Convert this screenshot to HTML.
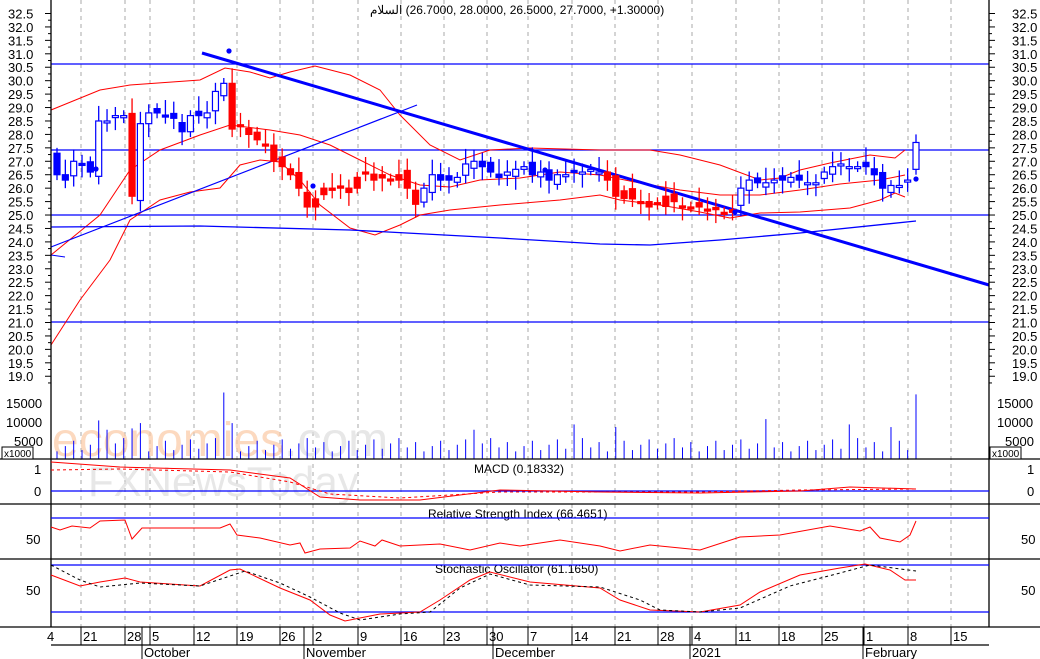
<!DOCTYPE html>
<html><head><meta charset="utf-8"><style>
body{margin:0;background:#fff;width:1040px;height:659px;overflow:hidden}
svg{display:block;font-family:"Liberation Sans",sans-serif}
text{font-size:13px;fill:#000}
</style></head><body>
<svg id="s" width="1040" height="659" viewBox="0 0 1040 659">
<rect width="1040" height="659" fill="#fff"/>
<g id="grid" stroke="#aaa" stroke-dasharray="4,4" stroke-width="1"></g>
<!-- watermark -->
<text x="52" y="456" style="font-size:48px;fill:#fbc9a5;opacity:.7">economies<tspan style="fill:#ddd">.com</tspan></text>
<text x="88" y="496" style="font-size:42px;fill:#ddd;opacity:.7">FXNewsToday</text>
<g id="main"></g>
<g id="vol"></g>
<!-- panel borders -->
<g stroke="#000" stroke-width="1.3" fill="none">
<line x1="51" y1="0" x2="51" y2="627"/><line x1="989" y1="0" x2="989" y2="627"/>
<line x1="0" y1="459" x2="1040" y2="459"/><line x1="0" y1="504" x2="1040" y2="504"/>
<line x1="0" y1="559" x2="1040" y2="559"/><line x1="0" y1="627" x2="1040" y2="627"/>
<line x1="51" y1="645" x2="989" y2="645"/>
</g>
<g id="ticks" stroke="#000" stroke-width="1"></g>
<text x="370" y="14" direction="ltr" unicode-bidi="embed" style="font-size:12px;direction:ltr;unicode-bidi:embed">&#x200E;السلام&#x200E; (26.7000, 28.0000, 26.5000, 27.7000, +1.30000)</text>
<g id="ylab" style="font-size:13px"></g>
<!-- volume labels -->
<g style="font-size:13px">
<text x="6" y="408">15000</text><text x="6" y="427">10000</text><text x="14" y="446">5000</text>
<text x="997" y="408">15000</text><text x="997" y="427">10000</text><text x="1005" y="446">5000</text>
<rect x="2" y="447" width="31" height="12" fill="#fff" stroke="#000"/><text x="4" y="457" style="font-size:10px">x1000</text>
<rect x="990" y="447" width="31" height="12" fill="#fff" stroke="#000"/><text x="992" y="457" style="font-size:10px">x1000</text>
<text x="34" y="474">1</text><text x="34" y="496">0</text><text x="1027" y="474">1</text><text x="1027" y="496">0</text>
<text x="26" y="544">50</text><text x="1021" y="544">50</text>
<text x="26" y="595">50</text><text x="1021" y="595">50</text>
<text x="474" y="473" style="font-size:12px">MACD (0.18332)</text>
<text x="428" y="518" style="font-size:12px">Relative Strength Index (66.4651)</text>
<text x="435" y="573" style="font-size:12px">Stochastic Oscillator (61.1650)</text>
</g>
<g id="osc" fill="none"></g>
<g style="font-size:13px">
<text x="47" y="641">4</text><text x="83" y="641">21</text><text x="127" y="641">28</text><text x="152" y="641">5</text>
<text x="196" y="641">12</text><text x="239" y="641">19</text><text x="281" y="641">26</text><text x="315" y="641">2</text>
<text x="360" y="641">9</text><text x="403" y="641">16</text><text x="446" y="641">23</text><text x="489" y="641">30</text>
<text x="530" y="641">7</text><text x="574" y="641">14</text><text x="617" y="641">21</text><text x="660" y="641">28</text>
<text x="694" y="641">4</text><text x="738" y="641">11</text><text x="781" y="641">18</text><text x="824" y="641">25</text>
<text x="866" y="641">1</text><text x="910" y="641">8</text><text x="953" y="641">15</text>
<text x="144" y="657">October</text><text x="306" y="657">November</text><text x="495" y="657">December</text>
<text x="692" y="657">2021</text><text x="865" y="657">February</text>
</g>
</svg>
<script>
var NS="http://www.w3.org/2000/svg";
function el(p,t,a){var e=document.createElementNS(NS,t);for(var k in a)e.setAttribute(k,a[k]);document.getElementById(p).appendChild(e);return e;}
function Y(p){return 13.5+(32.5-p)*26.87;}
var gx=[81,125,150,194,237,280,313,358,401,444,487,528,572,615,658,692,736,779,822,864,908,951];
gx.forEach(function(x){el("grid","line",{x1:x,y1:0,x2:x,y2:627});});
gx.forEach(function(x){el("ticks","line",{x1:x,y1:627,x2:x,y2:645});});
[142,304,493,690,863].forEach(function(x){el("ticks","line",{x1:x,y1:627,x2:x,y2:659});});
for(var p=19;p<=32.5;p+=0.5){var y=Y(p);var s=p.toFixed(1);
 var t=el("ylab","text",{x:8,y:y+5});t.textContent=s;
 var t2=el("ylab","text",{x:1012,y:y+5});t2.textContent=s;
 el("ticks","line",{x1:45,y1:y,x2:51,y2:y});el("ticks","line",{x1:989,y1:y,x2:995,y2:y});
 el("ticks","line",{x1:48,y1:y+6.7,x2:51,y2:y+6.7});el("ticks","line",{x1:989,y1:y+6.7,x2:992,y2:y+6.7});
}
[64,150,215,322].forEach(function(y){el("main","line",{x1:51,y1:y,x2:989,y2:y,stroke:"#00f","stroke-width":1.3});});
function pl(pts,c,w,par,d){var a={points:pts,stroke:c,"stroke-width":w||1,fill:"none"};if(d)a["stroke-dasharray"]=d;return el(par||"main","polyline",a);}
pl("51,110 100,90 130,85 200,80 225,68 250,72 270,78 290,72 315,66 350,75 380,90 400,115 430,145 460,160 490,150 530,148 600,150 650,150 680,155 720,165 760,180 780,178 800,170 830,163 870,155 895,158 905,150","red");
pl("51,255 100,215 130,170 160,150 200,135 230,125 270,130 300,135 330,145 360,160 390,175 420,185 450,187 480,180 520,178 560,172 600,175 640,183 680,190 720,195 760,195 800,190 840,184 880,180 905,175","red");
pl("51,345 80,300 110,260 130,220 160,200 190,192 220,188 240,165 260,160 280,162 300,180 320,205 350,228 375,235 400,225 420,215 450,210 500,205 560,200 600,195 620,200 660,205 700,212 730,218 760,213 800,212 850,208 880,200 895,193 905,197","red");
pl("51,227 200,226 350,230 500,238 600,244 650,245 720,240 800,233 916,221","#00f",1.3);
pl("51,255 65,257","#00f");
pl("51,247 417,105","#00f",1.2);
el("main","line",{x1:202,y1:53,x2:989,y2:285,stroke:"#00f","stroke-width":3});
var c=[26.5,26.3,27.0,26.9,26.6,28.5,28.5,28.7,28.7,25.7,28.4,28.8,28.8,28.7,28.6,28.1,28.7,28.7,28.8,29.6,29.9,28.2,28.3,28.0,27.8,27.6,27.0,26.8,26.5,26.0,25.3,25.6,26.0,26.0,26.0,26.0,26.4,26.6,26.3,26.5,26.3,26.5,26.0,25.4,26.0,26.5,26.3,26.3,26.4,26.9,27.0,26.8,26.6,26.4,26.6,26.7,26.8,26.5,26.6,26.3,26.5,26.5,26.6,26.6,26.7,26.6,26.3,25.7,25.9,25.6,25.5,25.3,25.4,25.7,25.5,25.3,25.3,25.3,25.2,25.2,25.1,25.2,26.0,26.3,26.2,26.2,26.3,26.3,26.4,26.3,26.2,26.2,26.6,26.8,26.9,26.8,26.8,26.8,26.5,26.0,26.1,26.1,26.3,27.7];
var n=c.length,st=(916-57)/(n-1);
for(var i=0;i<n;i++){var x=57+i*st,cl=c[i],op=i?c[i-1]+((i*7)%5-2)*0.08:27.3;
 var hi=Math.max(op,cl)+0.2+((i*3)%4)*0.12,lo=Math.min(op,cl)-0.2-((i*5)%4)*0.1;
 if(i==n-1){op=26.7;hi=28.0;lo=26.5;}
 var red=(x>230&&x<420)||(x>605&&x<735)||i==9;
 var col=red?"red":"#00f";
 el("main","line",{x1:x,y1:Y(hi),x2:x,y2:Y(lo),stroke:col,"stroke-width":1.3});
 var t=Math.min(Y(op),Y(cl)),h=Math.max(2,Math.abs(Y(op)-Y(cl)));
 var fill=(cl<op||red)?col:"#fff";
 el("main","rect",{x:x-3,y:t,width:6,height:h,fill:fill,stroke:col,"stroke-width":1.2});
 var v=2000+((i*37)%11)*350;if([5,6,9,10,21,50,62,67,85,95,100].indexOf(i)>=0)v+=5000;if(i==20)v=17500;if(i==n-1)v=17000;
 el("vol","line",{x1:x,y1:459,x2:x,y2:459-v*19/5000,stroke:"#00f","stroke-width":1});
}
[[229,51],[96,169],[313,186],[545,170],[735,212],[916,179]].forEach(function(d){el("main","circle",{cx:d[0],cy:d[1],r:2.6,fill:"#00f"});});
el("osc","line",{x1:51,y1:491,x2:989,y2:491,stroke:"#00f","stroke-width":1.3});
el("osc","line",{x1:51,y1:518,x2:989,y2:518,stroke:"#00f","stroke-width":1.3});
el("osc","line",{x1:51,y1:565,x2:989,y2:565,stroke:"#00f","stroke-width":1.3});
el("osc","line",{x1:51,y1:612,x2:989,y2:612,stroke:"#00f","stroke-width":1.3});
pl("51,462 120,467 230,470 290,478 320,497 360,500 420,500 500,490 600,492 700,493 800,491 850,487 916,489","red",1,"osc");
pl("51,470 120,469 230,472 290,482 330,494 400,498 500,492 600,492 700,492 800,490 916,489","red",1,"osc","3,3");
pl("51,527 60,530 72,526 90,528 100,521 125,520 132,539 142,528 220,528 230,524 237,535 260,538 290,545 300,543 305,553 320,549 350,548 360,541 375,546 382,540 400,546 440,544 470,550 500,543 520,546 560,540 600,546 620,551 650,545 700,550 740,537 780,535 830,526 860,531 870,527 880,538 900,542 910,535 916,521","red",1,"osc");
pl("51,575 80,586 100,582 125,578 140,582 200,586 230,570 240,569 280,588 310,600 330,615 345,621 380,614 420,612 440,600 470,580 490,572 530,582 600,588 620,600 650,610 700,612 740,605 760,592 800,575 840,568 865,564 890,570 905,580 916,580","red",1,"osc");
pl("51,565 80,580 100,587 140,583 200,586 245,571 280,583 310,597 340,613 360,620 400,614 430,612 460,588 490,574 530,585 600,587 640,600 660,610 700,612 740,608 790,586 840,573 870,565 916,571","#000",1,"osc","3,3");
</script>
</body></html>
